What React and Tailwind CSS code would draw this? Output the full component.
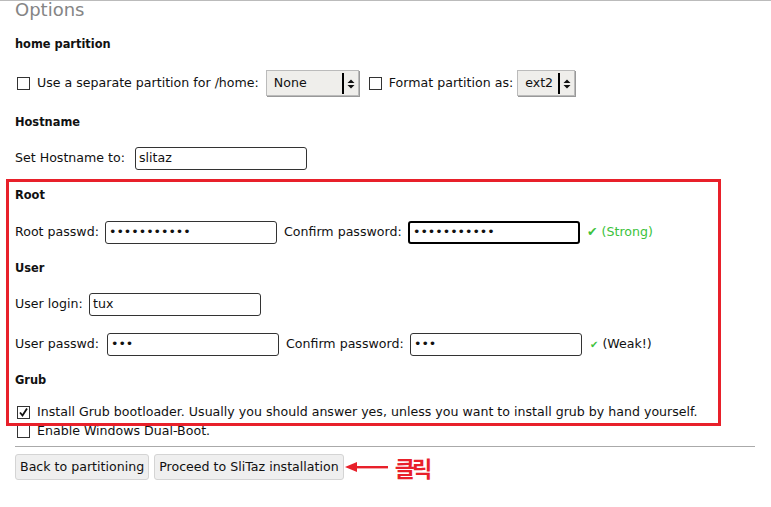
import React from 'react'

function Checkbox({ checked }) {
  return (
    <span className="mr-[7px] ml-[2px] flex h-[13px] w-[13px] shrink-0 items-center justify-center border border-[#333] bg-white">
      {checked && (
        <svg width="11" height="11" viewBox="0 0 11 11">
          <path d="M2 5.5 L4.5 8.5 L9 1.5" fill="none" stroke="#111" strokeWidth="1.8" />
        </svg>
      )}
    </span>
  )
}

function Select({ value, width }) {
  return (
    <div className={`relative flex h-[26px] ${width} shrink-0 items-center border border-[#bbb] bg-[#efeeeb] shadow-[1px_1px_0_#999]`}>
      <span className="pl-[7px]">{value}</span>
      <span className="absolute right-[14px] top-[2px] h-[21px] w-[2px] bg-black" />
      <svg className="absolute right-[3px] top-[8px]" width="8" height="10" viewBox="0 0 8 10">
        <path d="M0.5 4 L4 0.5 L7.5 4 Z M0.5 6 L4 9.5 L7.5 6 Z" fill="#111" />
      </svg>
    </div>
  )
}

function Field({ value, focused }) {
  return (
    <div
      className={`flex h-[23px] w-[172px] shrink-0 items-center rounded-[3px] bg-white pl-[3px] ${
        focused ? 'border-2 border-black' : 'border border-[#333]'
      }`}
    >
      <span className="whitespace-pre">{value}</span>
    </div>
  )
}

function Heading({ children, mt }) {
  return <div className={`flex h-[14px] items-center pt-[2px] text-[11.4px] font-bold ${mt}`}>{children}</div>
}

export default function App() {
  return (
    <div className="relative h-[507px] w-[771px] overflow-hidden bg-white font-['DejaVu_Sans',sans-serif] text-[12.6px] text-[#111]">
      <div className="h-px w-full bg-[#bbb]" />
      <div className="px-[15px]">
        <div className="h-[18px] text-[18px] leading-[18px] text-[#858585]">Options</div>

        <Heading mt="mt-[18px]">home partition</Heading>
        <div className="mt-[19px] flex h-[26px] items-center">
          <Checkbox />
          <span>Use a separate partition for /home:</span>
          <span className="ml-[7px]" />
          <Select value="None" width="w-[93px]" />
          <span className="ml-[8px]" />
          <Checkbox />
          <span>Format partition as:</span>
          <span className="ml-[4px]" />
          <Select value="ext2" width="w-[58px]" />
        </div>

        <Heading mt="mt-[19px]">Hostname</Heading>
        <div className="mt-[18px] flex h-[23px] items-center">
          <span className="w-[120px]">Set Hostname to:</span>
          <Field value="slitaz" />
        </div>

        <Heading mt="mt-[18px]">Root</Heading>
        <div className="mt-[19px] flex h-[23px] items-center">
          <span className="w-[90px]">Root passwd:</span>
          <Field value="•••••••••••" />
          <span className="ml-[7px] w-[124px]">Confirm password:</span>
          <Field value="•••••••••••" focused />
          <span className="ml-[7px] text-[#3cc23c]">✔ (Strong)</span>
        </div>

        <Heading mt="mt-[17px]">User</Heading>
        <div className="mt-[18px] flex h-[23px] items-center">
          <span className="w-[74px]">User login:</span>
          <Field value="tux" />
        </div>
        <div className="mt-[17px] flex h-[23px] items-center">
          <span className="w-[92px]">User passwd:</span>
          <Field value="•••" />
          <span className="ml-[7px] w-[124px]">Confirm password:</span>
          <Field value="•••" />
          <span className="ml-[8px] text-[10px] text-[#3cc23c]">✔</span>
          <span className="ml-[4px]">(Weak!)</span>
        </div>

        <Heading mt="mt-[17px]">Grub</Heading>
        <div className="mt-[18px] flex h-[14px] items-center">
          <Checkbox checked />
          <span>Install Grub bootloader. Usually you should answer yes, unless you want to install grub by hand yourself.</span>
        </div>
        <div className="mt-[5px] flex h-[14px] items-center">
          <Checkbox />
          <span>Enable Windows Dual-Boot.</span>
        </div>

        <div className="mt-[8px] h-px w-[740px] bg-[#aaa]" />

        <div className="mt-[7px] flex h-[26px] items-center gap-[5px]">
          <button className="h-[26px] rounded-[3px] border border-[#d4d4d4] bg-[#efefef] px-[4px] text-[12.6px] text-[#111]">
            Back to partitioning
          </button>
          <button className="h-[26px] rounded-[3px] border border-[#d4d4d4] bg-[#efefef] px-[4px] text-[12.6px] text-[#111]">
            Proceed to SliTaz installation
          </button>
          <svg className="-ml-[4px]" width="43" height="12" viewBox="0 0 43 12">
            <path d="M0 6 L12 1 L12 11 Z" fill="#e8202a" />
            <rect x="10" y="5" width="33" height="2.4" fill="#e8202a" />
          </svg>
          <span className="ml-[2px] font-['Noto_Sans_CJK_KR',sans-serif] text-[22px] font-bold leading-none tracking-[-3px] text-[#e8202a]">
            클릭
          </span>
        </div>
      </div>

      <div className="absolute left-[6px] top-[179px] h-[247px] w-[715px] border-[3px] border-[#e8202a]" />
    </div>
  )
}
